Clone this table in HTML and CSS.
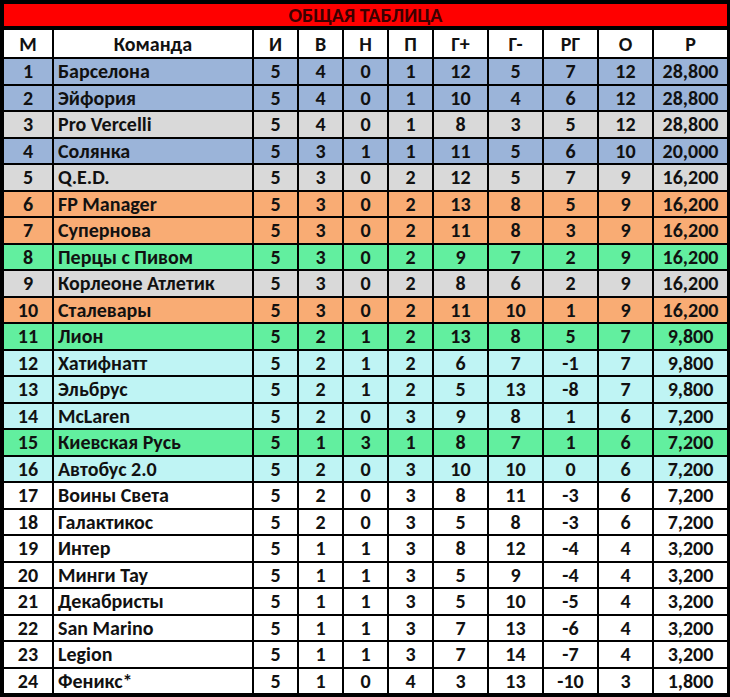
FILE: index.html
```html
<!DOCTYPE html>
<html lang="ru">
<head>
<meta charset="utf-8">
<title>Общая таблица</title>
<link rel="stylesheet" href="styles.css">
</head>
<body>
<table class="standings">
  <colgroup>
    <col class="c-pos"><col class="c-team"><col class="c-n"><col class="c-n"><col class="c-n"><col class="c-n">
    <col class="c-w"><col class="c-w"><col class="c-w"><col class="c-w"><col class="c-r">
  </colgroup>
  <thead>
    <tr class="title"><th colspan="11">ОБЩАЯ ТАБЛИЦА</th></tr>
    <tr class="head"><th>М</th><th>Команда</th><th>И</th><th>В</th><th>Н</th><th>П</th><th>Г+</th><th>Г-</th><th>РГ</th><th>О</th><th>Р</th></tr>
  </thead>
  <tbody>
    <tr class="blue"><td>1</td><td class="team">Барселона</td><td>5</td><td>4</td><td>0</td><td>1</td><td>12</td><td>5</td><td>7</td><td>12</td><td>28,800</td></tr>
    <tr class="blue"><td>2</td><td class="team">Эйфория</td><td>5</td><td>4</td><td>0</td><td>1</td><td>10</td><td>4</td><td>6</td><td>12</td><td>28,800</td></tr>
    <tr class="gray"><td>3</td><td class="team">Pro Vercelli</td><td>5</td><td>4</td><td>0</td><td>1</td><td>8</td><td>3</td><td>5</td><td>12</td><td>28,800</td></tr>
    <tr class="blue"><td>4</td><td class="team">Солянка</td><td>5</td><td>3</td><td>1</td><td>1</td><td>11</td><td>5</td><td>6</td><td>10</td><td>20,000</td></tr>
    <tr class="gray"><td>5</td><td class="team">Q.E.D.</td><td>5</td><td>3</td><td>0</td><td>2</td><td>12</td><td>5</td><td>7</td><td>9</td><td>16,200</td></tr>
    <tr class="orange"><td>6</td><td class="team">FP Manager</td><td>5</td><td>3</td><td>0</td><td>2</td><td>13</td><td>8</td><td>5</td><td>9</td><td>16,200</td></tr>
    <tr class="orange"><td>7</td><td class="team">Супернова</td><td>5</td><td>3</td><td>0</td><td>2</td><td>11</td><td>8</td><td>3</td><td>9</td><td>16,200</td></tr>
    <tr class="green"><td>8</td><td class="team">Перцы с Пивом</td><td>5</td><td>3</td><td>0</td><td>2</td><td>9</td><td>7</td><td>2</td><td>9</td><td>16,200</td></tr>
    <tr class="gray"><td>9</td><td class="team">Корлеоне Атлетик</td><td>5</td><td>3</td><td>0</td><td>2</td><td>8</td><td>6</td><td>2</td><td>9</td><td>16,200</td></tr>
    <tr class="orange"><td>10</td><td class="team">Сталевары</td><td>5</td><td>3</td><td>0</td><td>2</td><td>11</td><td>10</td><td>1</td><td>9</td><td>16,200</td></tr>
    <tr class="green"><td>11</td><td class="team">Лион</td><td>5</td><td>2</td><td>1</td><td>2</td><td>13</td><td>8</td><td>5</td><td>7</td><td>9,800</td></tr>
    <tr class="cyan"><td>12</td><td class="team">Хатифнатт</td><td>5</td><td>2</td><td>1</td><td>2</td><td>6</td><td>7</td><td>-1</td><td>7</td><td>9,800</td></tr>
    <tr class="cyan"><td>13</td><td class="team">Эльбрус</td><td>5</td><td>2</td><td>1</td><td>2</td><td>5</td><td>13</td><td>-8</td><td>7</td><td>9,800</td></tr>
    <tr class="cyan"><td>14</td><td class="team">McLaren</td><td>5</td><td>2</td><td>0</td><td>3</td><td>9</td><td>8</td><td>1</td><td>6</td><td>7,200</td></tr>
    <tr class="green"><td>15</td><td class="team">Киевская Русь</td><td>5</td><td>1</td><td>3</td><td>1</td><td>8</td><td>7</td><td>1</td><td>6</td><td>7,200</td></tr>
    <tr class="cyan"><td>16</td><td class="team">Автобус 2.0</td><td>5</td><td>2</td><td>0</td><td>3</td><td>10</td><td>10</td><td>0</td><td>6</td><td>7,200</td></tr>
    <tr><td>17</td><td class="team">Воины Света</td><td>5</td><td>2</td><td>0</td><td>3</td><td>8</td><td>11</td><td>-3</td><td>6</td><td>7,200</td></tr>
    <tr><td>18</td><td class="team">Галактикос</td><td>5</td><td>2</td><td>0</td><td>3</td><td>5</td><td>8</td><td>-3</td><td>6</td><td>7,200</td></tr>
    <tr><td>19</td><td class="team">Интер</td><td>5</td><td>1</td><td>1</td><td>3</td><td>8</td><td>12</td><td>-4</td><td>4</td><td>3,200</td></tr>
    <tr><td>20</td><td class="team">Минги Тау</td><td>5</td><td>1</td><td>1</td><td>3</td><td>5</td><td>9</td><td>-4</td><td>4</td><td>3,200</td></tr>
    <tr><td>21</td><td class="team">Декабристы</td><td>5</td><td>1</td><td>1</td><td>3</td><td>5</td><td>10</td><td>-5</td><td>4</td><td>3,200</td></tr>
    <tr><td>22</td><td class="team">San Marino</td><td>5</td><td>1</td><td>1</td><td>3</td><td>7</td><td>13</td><td>-6</td><td>4</td><td>3,200</td></tr>
    <tr><td>23</td><td class="team">Legion</td><td>5</td><td>1</td><td>1</td><td>3</td><td>7</td><td>14</td><td>-7</td><td>4</td><td>3,200</td></tr>
    <tr><td>24</td><td class="team">Феникс*</td><td>5</td><td>1</td><td>0</td><td>4</td><td>3</td><td>13</td><td>-10</td><td>3</td><td>1,800</td></tr>
  </tbody>
</table>
</body>
</html>
```

FILE: styles.css
```css
html, body {
  margin: 0;
  padding: 0;
  background: #ffffff;
}

.standings {
  width: 730px;
  table-layout: fixed;
  border-collapse: collapse;
  border: 4px solid #000;
  font-family: Carlito, Lato, "Open Sans", sans-serif;
  font-weight: 700;
  font-size: 20px;
  color: #111;
}

.c-pos { width: 51px; }
.c-team { width: 200px; }
.c-n { width: 45px; }
.c-w { width: 55px; }
.c-r { width: 76px; }

.standings th,
.standings td {
  border: 2px solid #000;
  text-align: center;
  padding: 0;
  height: 24px;
  line-height: 20px;
  white-space: nowrap;
  overflow: hidden;
}

.standings td {
  height: 24.5px;
}

.title th {
  background: #ff0000;
  color: #3c0000;
  height: 22px;
  font-size: 20px;
  border-bottom: 4px solid #000;
}

.head th {
  background: #ffffff;
  height: 27px;
}

.standings td.team {
  text-align: left;
  padding-left: 4px;
}

.blue td { background: #9bb4d9; }
.gray td { background: #d9d9d9; }
.orange td { background: #f9ac74; }
.green td { background: #62ef9f; }
.cyan td { background: #bff4f4; }
```
